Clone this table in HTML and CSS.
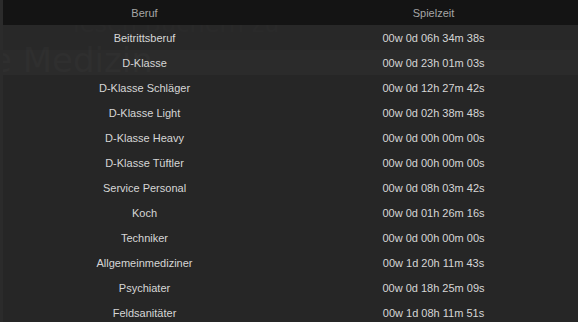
FILE: index.html
```html
<!DOCTYPE html>
<html lang="de">
<head>
<meta charset="utf-8">
<title>Spielzeit</title>
<link rel="stylesheet" href="styles.css">
</head>
<body>
<div class="panel">
  <div class="ghost ghost-1" aria-hidden="true">lesen Büchern zu</div>
  <div class="ghost ghost-2" aria-hidden="true">e Medizin</div>
  <div class="table">
    <div class="row head"><div class="cell">Beruf</div><div class="cell">Spielzeit</div></div>
    <div class="row r1"><div class="cell">Beitrittsberuf</div><div class="cell">00w 0d 06h 34m 38s</div></div>
    <div class="row r2"><div class="cell">D-Klasse</div><div class="cell">00w 0d 23h 01m 03s</div></div>
    <div class="row"><div class="cell">D-Klasse Schläger</div><div class="cell">00w 0d 12h 27m 42s</div></div>
    <div class="row"><div class="cell">D-Klasse Light</div><div class="cell">00w 0d 02h 38m 48s</div></div>
    <div class="row"><div class="cell">D-Klasse Heavy</div><div class="cell">00w 0d 00h 00m 00s</div></div>
    <div class="row"><div class="cell">D-Klasse Tüftler</div><div class="cell">00w 0d 00h 00m 00s</div></div>
    <div class="row"><div class="cell">Service Personal</div><div class="cell">00w 0d 08h 03m 42s</div></div>
    <div class="row"><div class="cell">Koch</div><div class="cell">00w 0d 01h 26m 16s</div></div>
    <div class="row"><div class="cell">Techniker</div><div class="cell">00w 0d 00h 00m 00s</div></div>
    <div class="row"><div class="cell">Allgemeinmediziner</div><div class="cell">00w 1d 20h 11m 43s</div></div>
    <div class="row"><div class="cell">Psychiater</div><div class="cell">00w 0d 18h 25m 09s</div></div>
    <div class="row"><div class="cell">Feldsanitäter</div><div class="cell">00w 1d 08h 11m 51s</div></div>
  </div>
</div>
</body>
</html>
```
FILE: styles.css
```css
html, body {
  margin: 0;
  padding: 0;
  background: #262626;
  overflow: hidden;
}
.panel {
  position: relative;
  width: 578px;
  height: 322px;
  overflow: hidden;
  background: #262626;
  font-family: "Liberation Sans", Arial, sans-serif;
  font-size: 11px;
  border-left: 3px solid #2b2b2b;
  box-sizing: border-box;
}
.table {
  position: relative;
  z-index: 1;
  display: flex;
  flex-direction: column;
  margin-left: -3px;
}
.row {
  display: grid;
  grid-template-columns: 289px 289px;
  height: 25px;
  align-items: center;
  color: #d6d6d6;
}
.row .cell {
  text-align: center;
  line-height: 26px;
}
.row.head {
  background: #141414;
  color: #a6a6a6;
}
.row.r1 {
  background: rgba(42, 42, 42, 0.6);
}
.row.r2 {
  background: rgba(46, 46, 46, 0.6);
}
.ghost {
  position: absolute;
  z-index: 0;
  white-space: nowrap;
  font-family: "DejaVu Sans", sans-serif;
}
.ghost-1 {
  top: 10px;
  left: 70px;
  font-size: 24px;
  color: #2c2c2c;
}
.ghost-2 {
  top: 40px;
  left: -12px;
  font-size: 34px;
  color: #303030;
}
```
